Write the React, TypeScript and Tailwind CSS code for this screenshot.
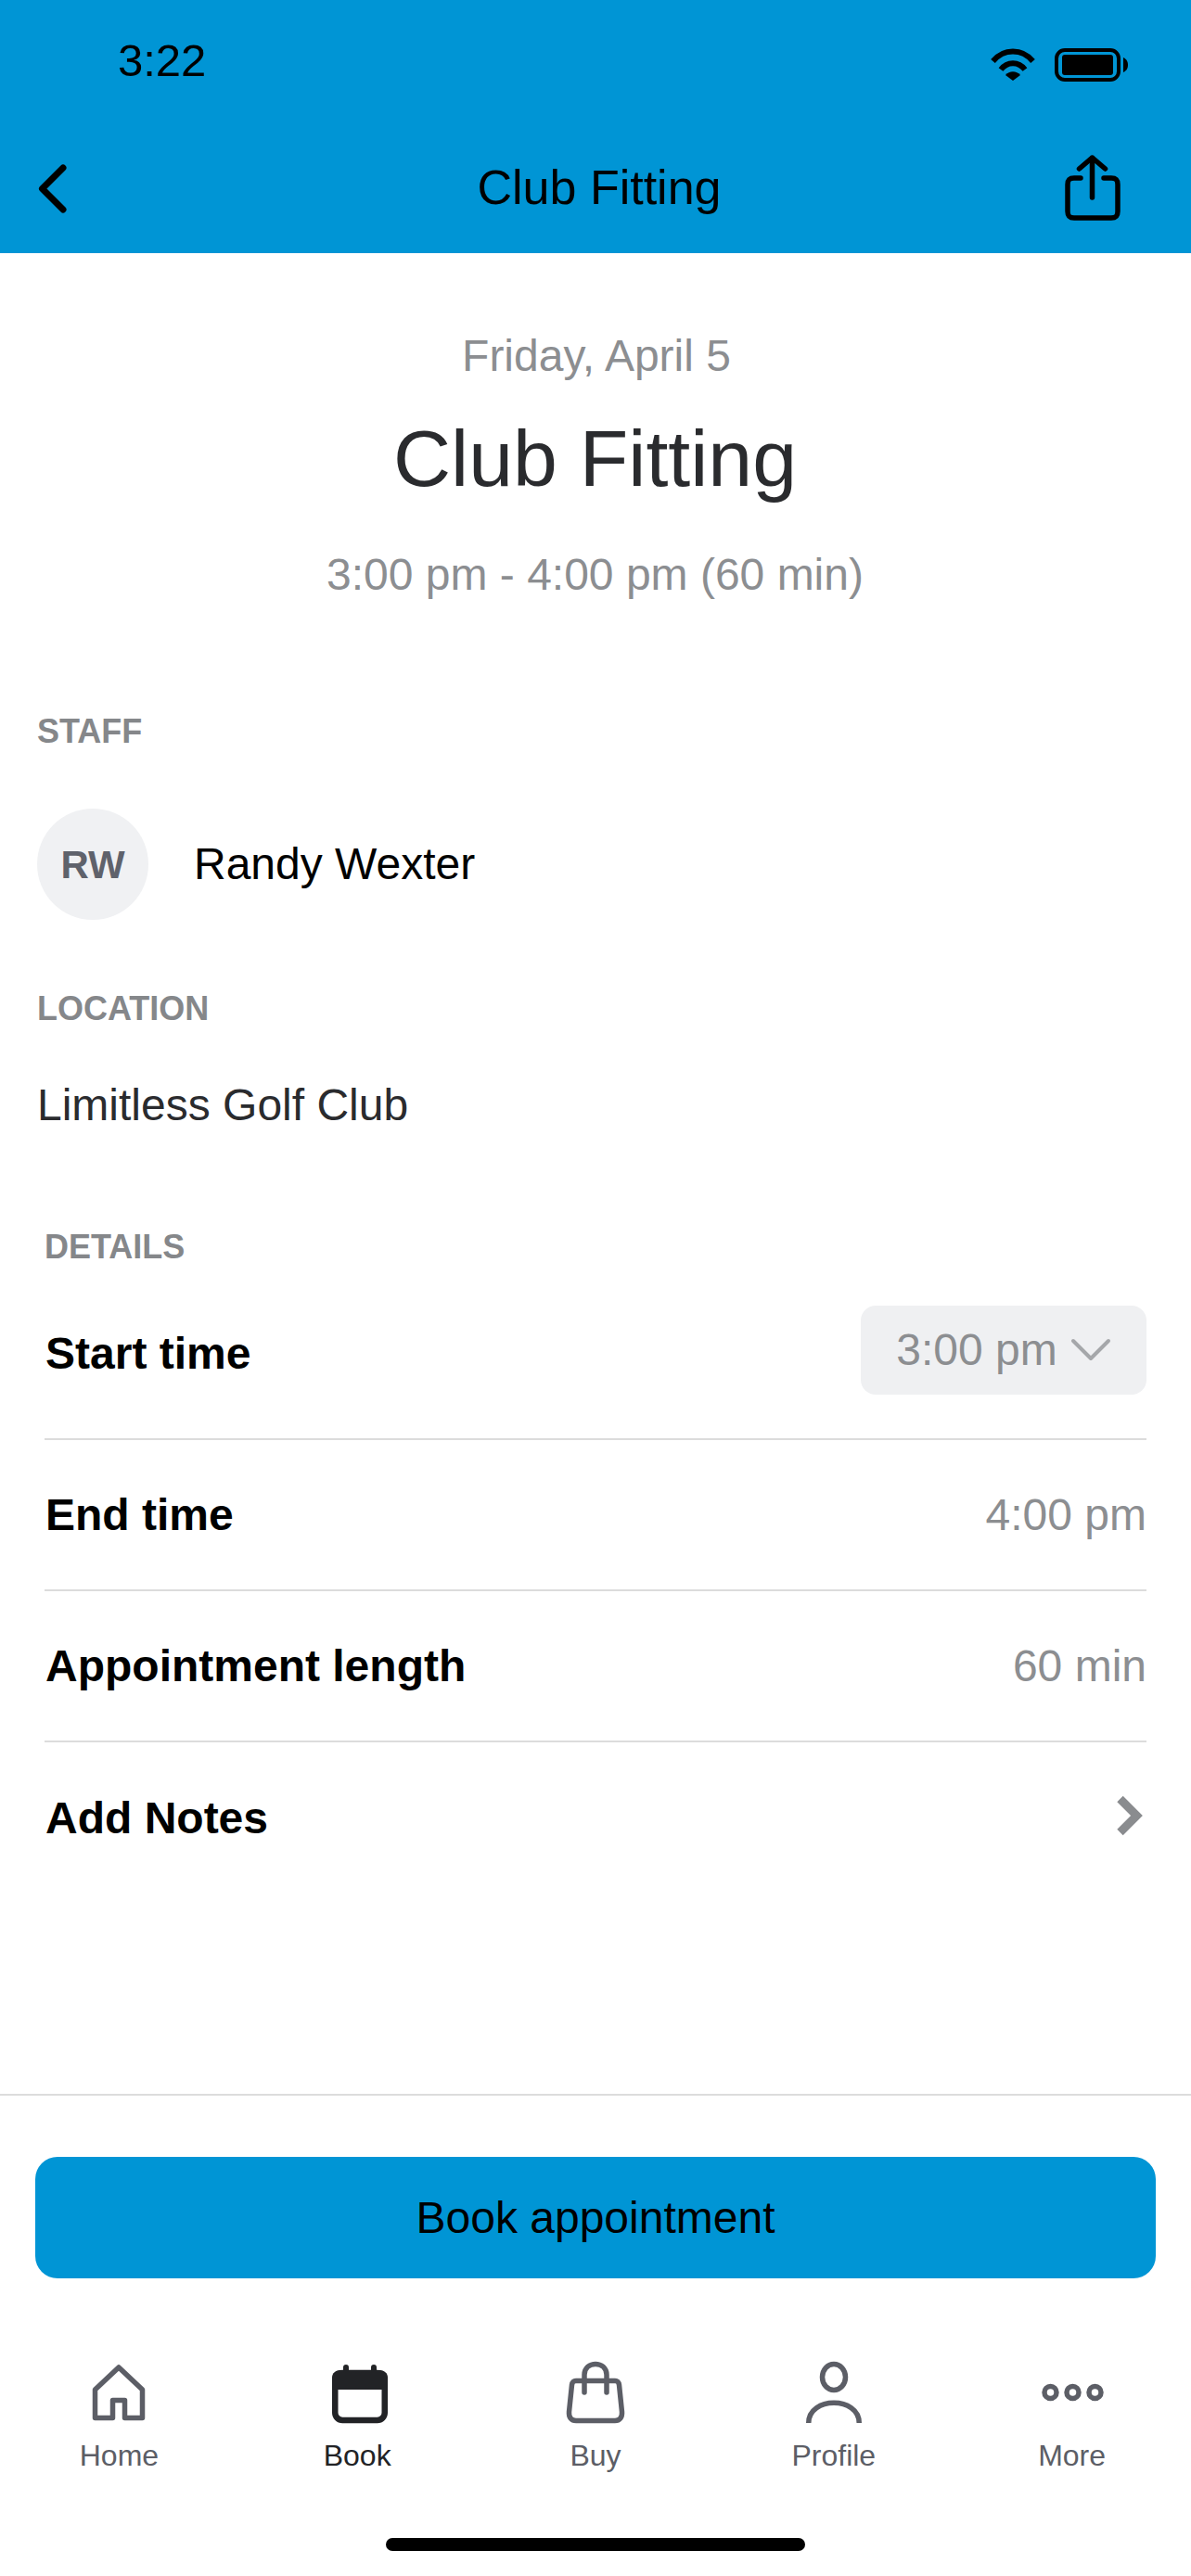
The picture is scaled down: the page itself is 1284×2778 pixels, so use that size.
const font = "font-['Liberation_Sans',Arial,sans-serif]";

function Label({ children, className = '' }: { children: string; className?: string }) {
  return <div className={`text-[36px] leading-[40px] font-bold text-[#85878a] ${className}`}>{children}</div>;
}

function DetailRow({ label, children, border = true, height = 'h-[163px]' }: { label: string; children: React.ReactNode; border?: boolean; height?: string }) {
  return (
    <div className={`flex items-center justify-between ${height} ${border ? 'border-b-2 border-[#dcdcdc]' : ''}`}>
      <span className="pl-px text-[48px] leading-[60px] font-bold text-black">{label}</span>
      {children}
    </div>
  );
}

function TabItem({ label, active, children }: { label: string; active?: boolean; children: React.ReactNode }) {
  return (
    <div className="flex flex-col items-center w-[256.8px]">
      <svg width="70" height="70" viewBox="0 0 70 70" fill="none" className={active ? 'relative left-[3px]' : ''}>
        {children}
      </svg>
      <span className={`mt-[16px] text-[32px] leading-[36px] ${active ? 'text-[#222326]' : 'text-[#5c5e66]'}`}>{label}</span>
    </div>
  );
}

export default function App() {
  return (
    <div className={`${font} flex h-[2778px] w-[1284px] flex-col bg-white text-black`}>
      <header className="h-[273px] shrink-0 bg-[#0095d5]">
        <div className="flex h-[132px] items-start justify-between pl-[127px] pr-[67px] pt-[38px]">
          <span className="text-[49px] leading-[54px]">3:22</span>
          <div className="flex items-center gap-[20px] pt-[14px]">
            <svg width="50" height="36" viewBox="0 0 50 36" fill="none">
              <path d="M3.5 14 C15 0 35 0 46.5 14" stroke="black" strokeWidth="6" />
              <path d="M12 23 C19 14 31 14 38 23" stroke="black" strokeWidth="6" />
              <path d="M25 35 L17 29 C21 24 29 24 33 29 Z" fill="black" />
            </svg>
            <svg width="80" height="36" viewBox="0 0 80 36" fill="none">
              <rect x="2" y="2" width="67" height="32" rx="9" stroke="black" strokeWidth="4" />
              <rect x="8" y="7" width="55" height="22" rx="3" fill="black" />
              <path d="M74 10 C78 12 79 15 79 18 C79 21 78 24 74 26 Z" fill="black" />
            </svg>
          </div>
        </div>
        <div className="grid h-[141px] grid-cols-[1fr_auto_1fr] items-center pl-[40px] pr-[32px]">
          <svg width="36" height="60" viewBox="0 0 36 60" fill="none">
            <path d="M28 8 L5.5 30.5 L28 53" stroke="black" strokeWidth="7" strokeLinecap="round" strokeLinejoin="round" />
          </svg>
          <span className="mb-[1px] text-[52px] leading-[60px]">Club Fitting</span>
          <svg width="60" height="72" viewBox="0 0 60 72" fill="none" className="mr-[44px] justify-self-end">
            <path d="M29.5 46 V3 M15.5 15 L29.5 3 L43.5 15" stroke="black" strokeWidth="5.5" strokeLinecap="round" strokeLinejoin="round" />
            <path d="M17 25 H10 C5 25 3 27 3 32 V61 C3 66 5 68 10 68 H50 C55 68 57 66 57 61 V32 C57 27 55 25 50 25 H42" stroke="black" strokeWidth="5.5" strokeLinecap="round" />
          </svg>
        </div>
      </header>

      <main className="flex-1">
        <div className="flex flex-col items-center pr-[1px] pt-[84px]">
          <div className="pl-[3px] text-[48px] leading-[54px] text-[#8c8e91]">Friday, April 5</div>
          <div className="mt-[34px] text-[86px] leading-[98px] text-[#2a2b2e]">Club Fitting</div>
          <div className="mt-[49px] text-[48px] leading-[56px] text-[#8c8e91]">3:00 pm - 4:00 pm (60 min)</div>
        </div>

        <div className="px-[40px]">
          <Label className="mt-[121px]">STAFF</Label>
          <div className="mt-[63px] flex items-center gap-[49px]">
            <div className="flex h-[120px] w-[120px] items-center justify-center rounded-full bg-[#f0f1f3] text-[42px] font-bold text-[#5f626b]">RW</div>
            <span className="text-[48px] leading-[56px] text-black">Randy Wexter</span>
          </div>
          <Label className="mt-[76px]">LOCATION</Label>
          <div className="mt-[56px] text-[48px] leading-[56px] text-[#2a2b2e]">Limitless Golf Club</div>
        </div>

        <div className="pl-[48px] pr-[48px]">
          <Label className="mt-[105px]">DETAILS</Label>
          <DetailRow label="Start time" height="h-[188px] pt-[4px]">
            <div className="mb-[8px] flex h-[96px] w-[308px] items-center justify-center gap-[14px] rounded-[16px] bg-[#eff0f2]">
              <span className="text-[48px] leading-[56px] text-[#8c8e91]">3:00 pm</span>
              <svg width="44" height="26" viewBox="0 0 44 26" fill="none">
                <path d="M3 3 L22 22 L41 3" stroke="#a5a7aa" strokeWidth="4" strokeLinecap="round" strokeLinejoin="round" />
              </svg>
            </div>
          </DetailRow>
          <DetailRow label="End time">
            <span className="text-[48px] leading-[56px] text-[#8c8e91]">4:00 pm</span>
          </DetailRow>
          <DetailRow label="Appointment length">
            <span className="text-[48px] leading-[56px] text-[#8c8e91]">60 min</span>
          </DetailRow>
          <DetailRow label="Add Notes" border={false}>
            <svg width="32" height="44" viewBox="0 0 32 44" fill="none" className="mb-[5px]">
              <path d="M3.5 4 L21.5 22 L3.5 40" stroke="#8a8c8f" strokeWidth="9" />
            </svg>
          </DetailRow>
        </div>
      </main>

      <footer className="h-[520px] shrink-0 border-t-2 border-[#dcdcdc]">
        <div className="px-[38px] pt-[66px]">
          <button className="h-[131px] w-full rounded-[24px] bg-[#0095d5] text-[48px] text-black">Book appointment</button>
        </div>
        <nav className="mt-[87px] flex">
          <TabItem label="Home">
            <path d="M9.5 63.5 V33 L35 9 L60.5 33 V63.5 H41.5 V44.5 H28.5 V63.5 Z" stroke="#5c5e66" strokeWidth="5.5" strokeLinejoin="round" />
          </TabItem>
          <TabItem label="Book" active>
            <path d="M20 9 V14 M50 9 V14" stroke="#222326" strokeWidth="6" strokeLinecap="round" />
            <rect x="8.25" y="15" width="53.5" height="51" rx="8" stroke="#222326" strokeWidth="6.5" />
            <path d="M5 33 V20 C5 15 9 12 14 12 H56 C61 12 65 15 65 20 V33 Z" fill="#222326" />
          </TabItem>
          <TabItem label="Buy">
            <path d="M14 23.5 H56 C59 23.5 60 25 60.5 28 L63.5 57 C64 63 61 66.5 56 66.5 H14 C9 66.5 6 63 6.5 57 L9.5 28 C10 25 11 23.5 14 23.5 Z" stroke="#5c5e66" strokeWidth="5.5" strokeLinejoin="round" />
            <path d="M23 36 V17 C23 1.5 47 1.5 47 17 V36" stroke="#5c5e66" strokeWidth="5.5" strokeLinecap="round" />
          </TabItem>
          <TabItem label="Profile">
            <ellipse cx="35" cy="19.5" rx="12.5" ry="14" stroke="#5c5e66" strokeWidth="5.5" />
            <path d="M7.75 69 C7.75 40 62.25 40 62.25 69" stroke="#5c5e66" strokeWidth="5.5" />
          </TabItem>
          <TabItem label="More">
            <circle cx="11.5" cy="36" r="6.5" stroke="#5c5e66" strokeWidth="5.5" />
            <circle cx="35.5" cy="36" r="6.5" stroke="#5c5e66" strokeWidth="5.5" />
            <circle cx="59.5" cy="36" r="6.5" stroke="#5c5e66" strokeWidth="5.5" />
          </TabItem>
        </nav>
        <div className="mt-[71px] flex justify-center">
          <div className="h-[14px] w-[452px] rounded-full bg-black" />
        </div>
      </footer>
    </div>
  );
}
